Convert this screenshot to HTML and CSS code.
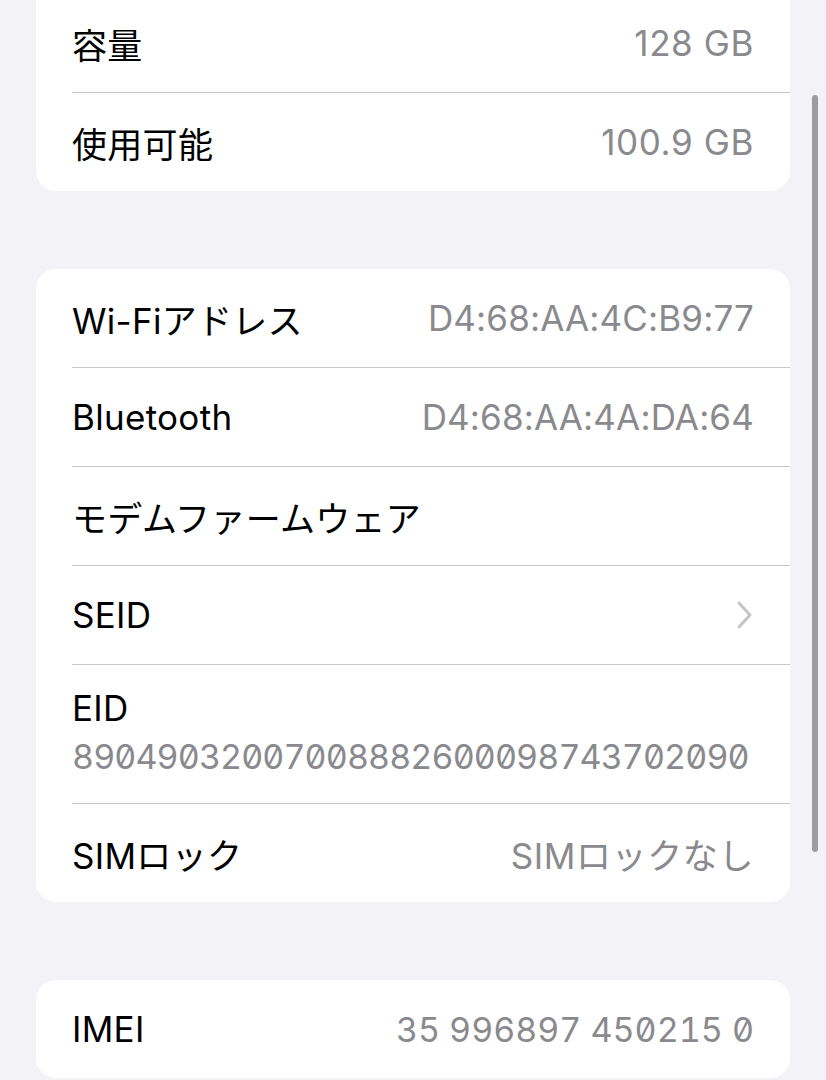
FILE: index.html
```html
<!DOCTYPE html>
<html lang="ja">
<head>
    <meta charset="UTF-8">
    <title>情報</title>
    <link rel="stylesheet" href="styles.css">
</head>
<body>
    <div class="screen">
        <!-- Storage -->
        <div class="card card-top">
            <div class="row">
                <span class="label">容量</span>
                <span class="value">128 GB</span>
            </div>
            <div class="row">
                <span class="label">使用可能</span>
                <span class="value">100.9 GB</span>
            </div>
        </div>

        <!-- Network -->
        <div class="card">
            <div class="row">
                <span class="label">Wi-Fiアドレス</span>
                <span class="value mac">D4:68:AA:4C:B9:77</span>
            </div>
            <div class="row">
                <span class="label">Bluetooth</span>
                <span class="value mac">D4:68:AA:4A:DA:64</span>
            </div>
            <div class="row">
                <span class="label">モデムファームウェア</span>
                <span class="value"></span>
            </div>
            <div class="row">
                <span class="label">SEID</span>
                <svg class="chevron" width="16" height="30" viewBox="0 0 16 30">
                    <path d="M3 3 L14 15 L3 27" fill="none" stroke="#c4c4c7" stroke-width="3" stroke-linecap="round" stroke-linejoin="round"/>
                </svg>
            </div>
            <div class="row row-stacked">
                <span class="label">EID</span>
                <span class="value mono eid">89049032007008882600098743702090</span>
            </div>
            <div class="row">
                <span class="label">SIMロック</span>
                <span class="value">SIMロックなし</span>
            </div>
        </div>

        <!-- Identifiers -->
        <div class="card">
            <div class="row">
                <span class="label">IMEI</span>
                <span class="value mono">35 996897 450215 0</span>
            </div>
        </div>

        <div class="scroll-indicator"></div>
    </div>
</body>
</html>
```

FILE: styles.css
```css
/* Reset */
* {
    margin: 0;
    padding: 0;
    box-sizing: border-box;
}

body {
    background-color: #f2f2f7;
    font-family: Inter, "Noto Sans CJK JP", sans-serif;
    color: #000;
    overflow: hidden;
}

/* Screen */
.screen {
    position: relative;
    width: 826px;
    height: 1080px;
    padding: 0 36px;
    display: flex;
    flex-direction: column;
    gap: 78px;
}

/* Grouped cards */
.card {
    background-color: #fff;
    border-radius: 20px;
    padding-left: 36px;
    overflow: hidden;
}

.card-top {
    margin-top: -26px;
    padding-top: 20px;
}

.row {
    height: 99px;
    padding-right: 36px;
    display: flex;
    align-items: center;
    justify-content: space-between;
    border-bottom: 1px solid #c8c8cb;
    font-size: 35px;
}

.row:last-child {
    border-bottom: none;
    height: 98px;
}

.row-stacked {
    height: 139px;
    flex-direction: column;
    align-items: flex-start;
    justify-content: flex-start;
    padding-top: 21px;
    gap: 5px;
}

.row-stacked .label,
.row-stacked .value {
    line-height: 44px;
}

.label {
    color: #000;
    letter-spacing: 0.3px;
}

.value {
    color: #8a8a8e;
    letter-spacing: 0.6px;
}

.mac {
    letter-spacing: 0.15px;
}

.mono {
    font-size: 34px;
    font-feature-settings: "tnum", "zero";
    letter-spacing: 0;
}

.eid {
    letter-spacing: -0.9px;
}

.chevron {
    display: block;
    margin-right: 2px;
}

/* Scroll indicator overlay */
.scroll-indicator {
    position: absolute;
    top: 95px;
    left: 812px;
    width: 6px;
    height: 757px;
    border-radius: 3px;
    background-color: #9d9da1;
}
```
